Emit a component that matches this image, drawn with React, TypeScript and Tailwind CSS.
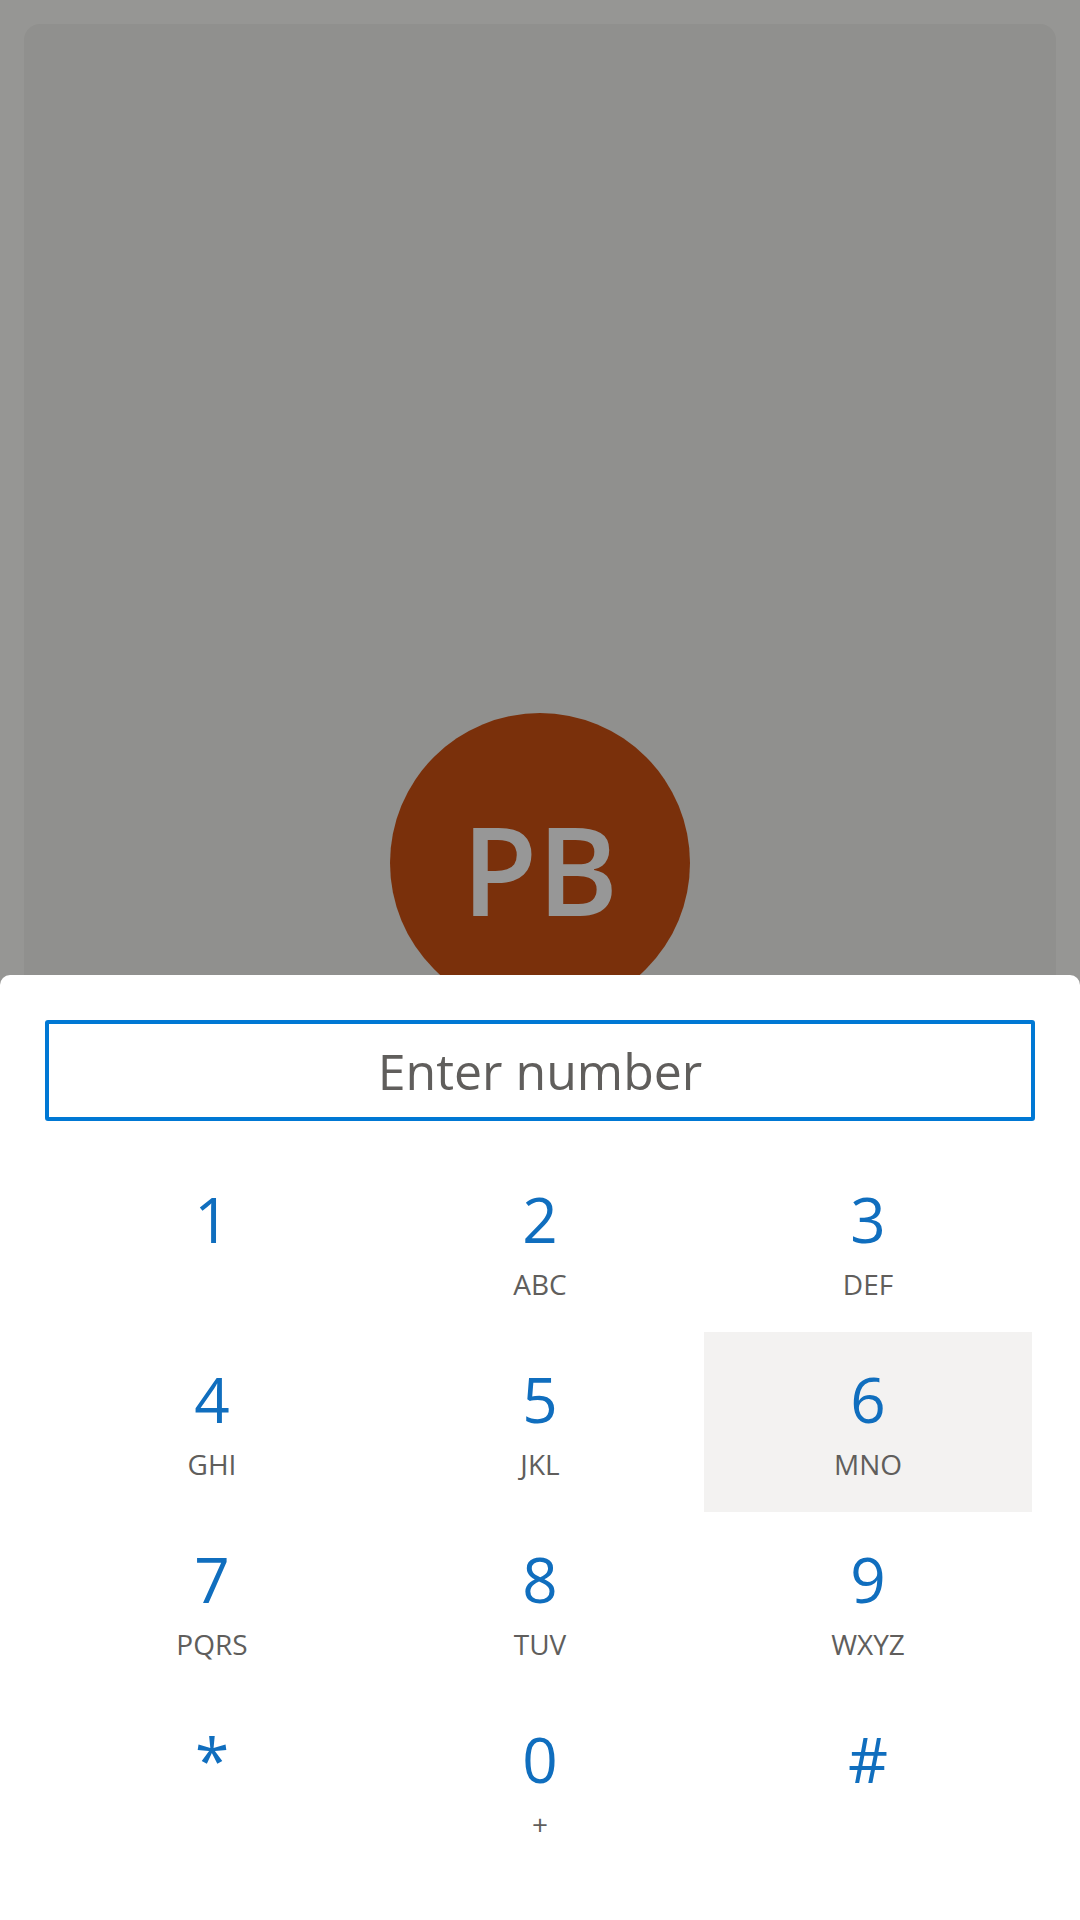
const keys = [
  { d: '1', l: '' },
  { d: '2', l: 'ABC' },
  { d: '3', l: 'DEF' },
  { d: '4', l: 'GHI' },
  { d: '5', l: 'JKL' },
  { d: '6', l: 'MNO', active: true },
  { d: '7', l: 'PQRS' },
  { d: '8', l: 'TUV' },
  { d: '9', l: 'WXYZ' },
  { d: '*', l: '' },
  { d: '0', l: '+' },
  { d: '#', l: '' },
];

const Key = ({ d, l, active }: { d: string; l: string; active?: boolean }) => (
  <div className={`flex h-[180px] flex-col items-center pt-[36px] ${active ? 'bg-[#f3f2f1]' : ''}`}>
    <span className="text-[62px] leading-[62px] text-[#106ebe]">{d}</span>
    <span className="mt-[20px] h-[28px] text-[28px] leading-[28px] text-[#605e5c]">{l || '\u00a0'}</span>
  </div>
);

export default function App() {
  return (
    <div className="flex h-[1920px] w-[1080px] flex-col overflow-hidden bg-[#969694] font-['Open_Sans','Noto_Sans',sans-serif]">
      {/* contact card behind the dialer */}
      <div className="mx-6 mt-6 h-[951px] shrink-0 overflow-hidden rounded-t-2xl bg-[#90908e]">
        <div className="mx-auto mt-[689px] flex h-[300px] w-[300px] items-center justify-center rounded-full bg-[#7a300b]">
          <span className="mt-[10px] text-[123px] font-semibold leading-none text-[#979797]">PB</span>
        </div>
      </div>

      {/* dial pad sheet */}
      <div className="flex flex-1 flex-col rounded-t-[10px] bg-white">
        <div className="mx-[45px] mt-[45px] flex h-[101px] items-center justify-center rounded-[3px] border-4 border-[#0078d4]">
          <span className="text-[50px] leading-none text-[#605e5c]">Enter number</span>
        </div>
        <div className="mt-[31px] grid grid-cols-3 px-12">
          {keys.map((k) => (
            <Key key={k.d} {...k} />
          ))}
        </div>
      </div>
    </div>
  );
}
